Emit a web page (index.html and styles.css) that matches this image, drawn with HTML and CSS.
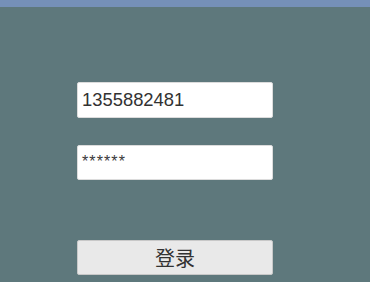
FILE: index.html
```html
<!DOCTYPE html>
<html>
<head>
<meta charset="utf-8">
<link rel="stylesheet" href="styles.css">
</head>
<body>
<div class="topbar"></div>
<div class="form">
  <div class="field"><span class="value">1355882481</span></div>
  <div class="field pw"><span class="value stars">******</span></div>
  <button class="login">登录</button>
</div>
</body>
</html>
```
FILE: styles.css
```css
html, body {
  margin: 0;
  padding: 0;
  width: 370px;
  height: 282px;
  overflow: hidden;
  background: #5e787c;
  font-family: "Liberation Sans", "Noto Sans CJK SC", sans-serif;
}
.topbar {
  height: 7px;
  background: #7590b8;
}
.form {
  display: flex;
  flex-direction: column;
  margin-left: 77px;
  width: 196px;
  padding-top: 75px;
}
.field {
  box-sizing: border-box;
  height: 36px;
  background: #ffffff;
  border: 1px solid #dcdcdc;
  border-radius: 2px;
  display: flex;
  align-items: center;
  padding-left: 4px;
}
.value {
  font-size: 18.4px;
  color: #323232;
}
.field.pw {
  margin-top: 27px;
  height: 35px;
  align-items: flex-start;
  padding-top: 7px;
}
.stars {
  font-size: 16px;
  letter-spacing: 1.1px;
  color: #3a3a3a;
}
.login {
  margin-top: 60px;
  height: 35px;
  box-sizing: border-box;
  background: #e9e9e9;
  border: 1px solid #c8c8c8;
  border-radius: 2px;
  font-family: "Noto Sans CJK SC", sans-serif;
  font-size: 20px;
  color: #323232;
  padding: 0;
  line-height: 33px;
}
```
